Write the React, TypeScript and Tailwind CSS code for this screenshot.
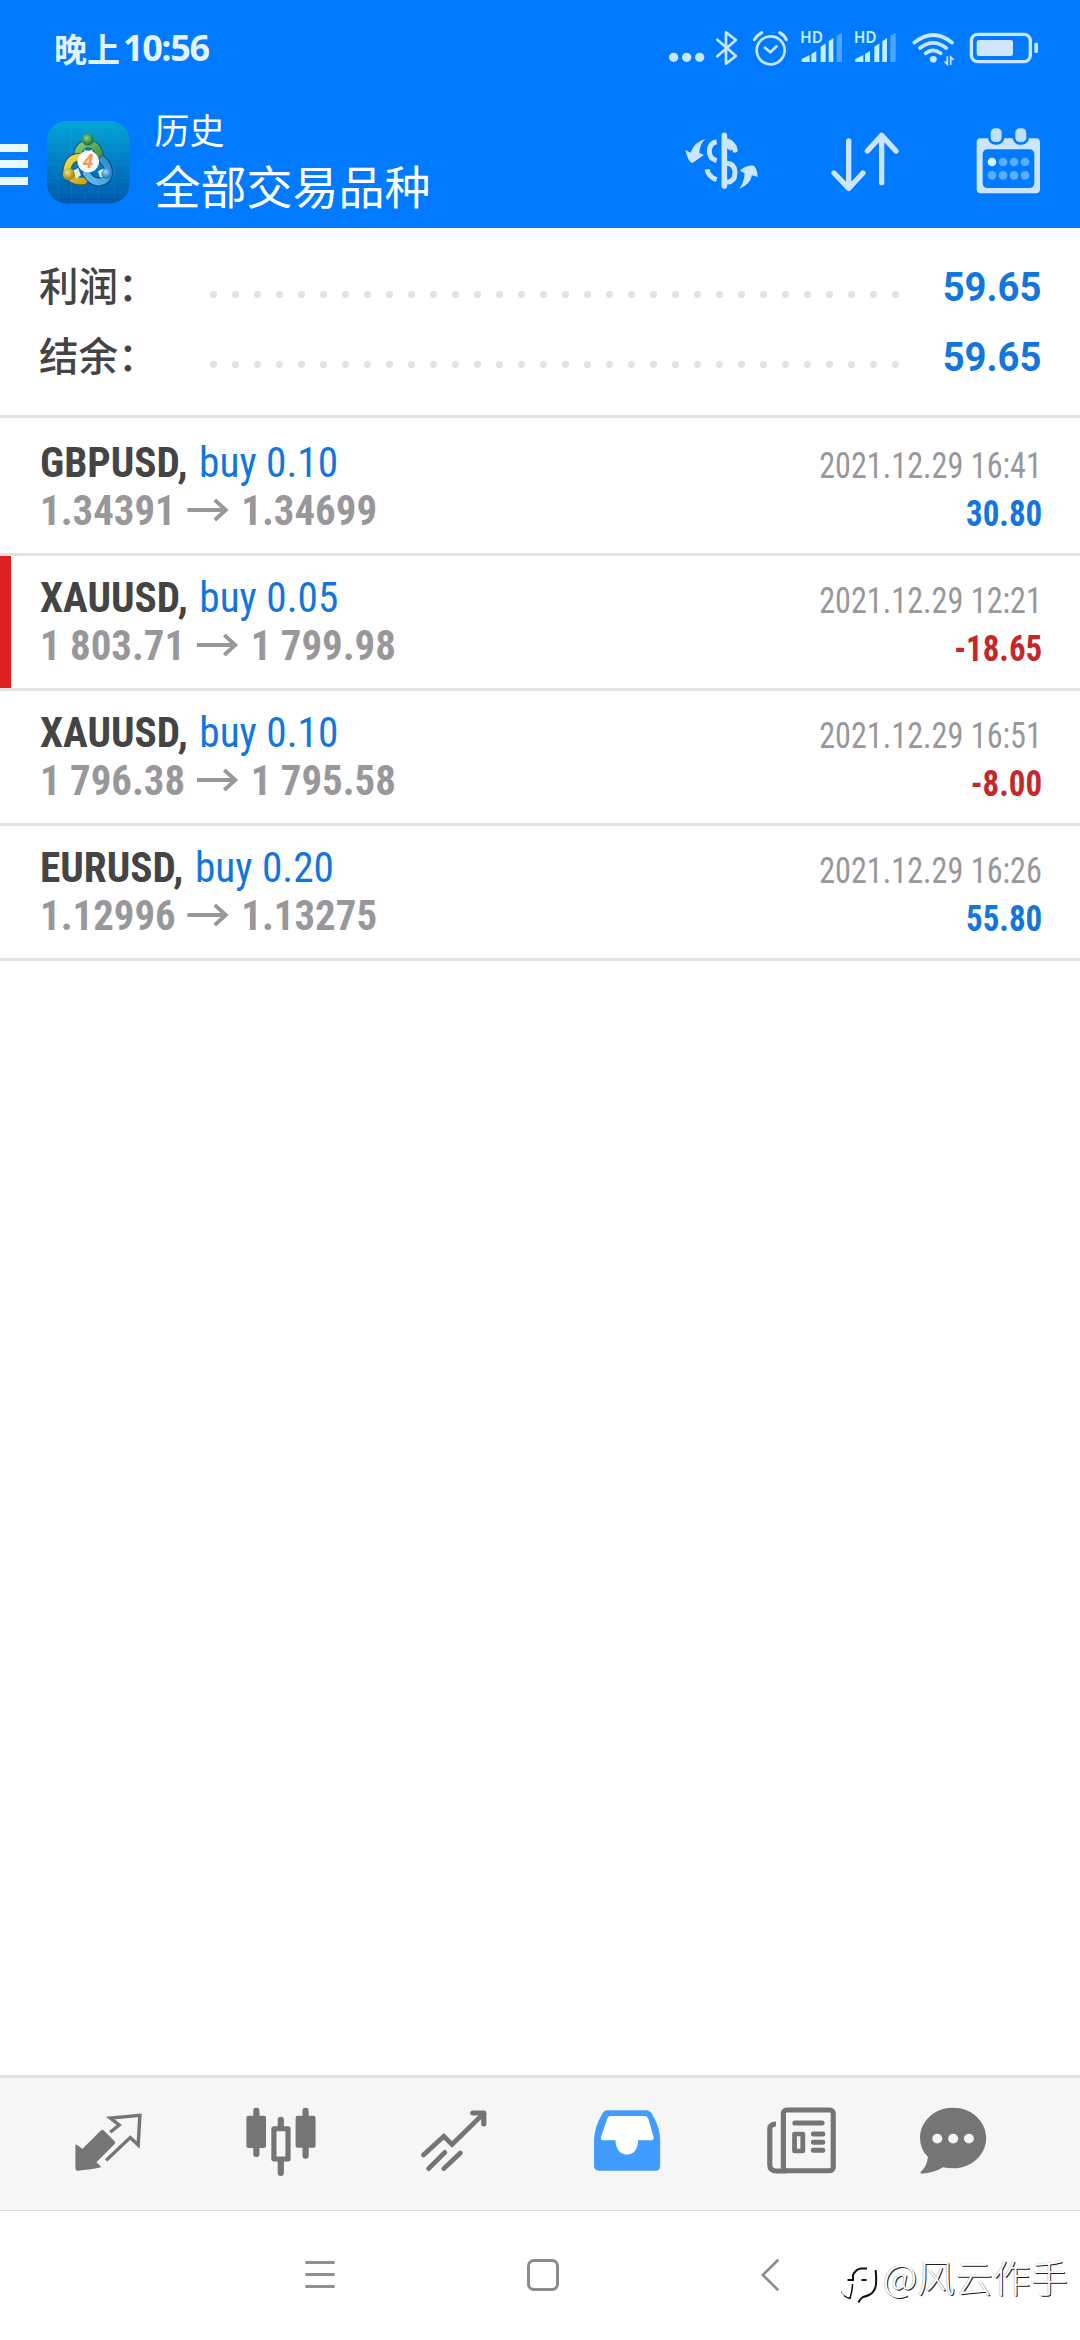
import React from "react";

type Trade = {
  symbol: string;
  volume: string;
  open: string;
  close: string;
  time: string;
  profit: string;
  loss?: boolean;
  marked?: boolean;
};

const trades: Trade[] = [
  { symbol: "GBPUSD,", volume: "buy 0.10", open: "1.34391", close: "1.34699", time: "2021.12.29 16:41", profit: "30.80" },
  { symbol: "XAUUSD,", volume: "buy 0.05", open: "1 803.71", close: "1 799.98", time: "2021.12.29 12:21", profit: "-18.65", loss: true, marked: true },
  { symbol: "XAUUSD,", volume: "buy 0.10", open: "1 796.38", close: "1 795.58", time: "2021.12.29 16:51", profit: "-8.00", loss: true },
  { symbol: "EURUSD,", volume: "buy 0.20", open: "1.12996", close: "1.13275", time: "2021.12.29 16:26", profit: "55.80" },
];

function Signal({ x }: { x: number }) {
  return (
    <g transform={`translate(${x} 0)`}>
      <text x="-2" y="130" fontSize="47" fontWeight="600" fontFamily="Noto Sans, sans-serif" textLength="69" lengthAdjust="spacingAndGlyphs">HD</text>
      <path d="M3 186v-9l24-12v21zM32 186v-24l15-9v33zM60 186v-46l15-10v56zM84 186v-62l14-10v72z" />
      <path d="M108 186v-79l16-9v88z" opacity=".38" />
    </g>
  );
}

function StatusBar() {
  return (
    <div className="flex h-[80px] items-start justify-between pl-[54px] pr-[42px]">
      <div className="mt-[25px] flex h-[46px] items-center leading-[46px]">
        <span className="font-['Noto_Sans_CJK_SC',sans-serif] text-[33px] font-bold">晚上</span>
        <span className="ml-[3px] font-['Open_Sans','Noto_Sans',sans-serif] text-[36px] font-bold tracking-[-1.4px]">10:56</span>
      </div>
      <div className="mt-[30px] flex text-[#c9e6ff]">
        <svg className="h-[36.67px] w-[41.33px]" viewBox="86 90 124 110" fill="currentColor">
          <circle cx="100" cy="172" r="14" /><circle cx="139" cy="172" r="14" /><circle cx="178" cy="172" r="14" />
        </svg>
        <svg className="h-[36.67px] w-[35.33px]" viewBox="210 90 106 110" fill="none" stroke="currentColor" strokeWidth="8" strokeLinejoin="round" strokeLinecap="round">
          <path d="M232 119l56 49-30 23V97l30 23-56 49" />
        </svg>
        <svg className="h-[36.67px] w-[49px]" viewBox="316 90 147 110" fill="none" stroke="currentColor" strokeWidth="8" strokeLinecap="round">
          <circle cx="393" cy="151" r="42" />
          <path d="M344 119q8-13 22-21M420 98q14 8 20 21" strokeWidth="9" />
          <path d="M376 143l16 14 19-18" strokeLinejoin="round" />
        </svg>
        <svg className="-mt-[10px] h-[46.67px] w-[109.67px] text-[#c3f0ff]" viewBox="463 60 329 140" fill="currentColor">
          <Signal x={483} />
          <Signal x={644} />
        </svg>
        <svg className="h-[36.67px] w-[58px]" viewBox="792 90 174 110" fill="none" stroke="currentColor" strokeWidth="11" strokeLinecap="round">
          <path d="M823 128q57-46 113 0M840 144q39-31 79 0M857 160q22-18 45 0" />
          <path d="M869 175q11-8 22 0l-11 13z" fill="currentColor" stroke="none" />
          <circle cx="880" cy="178" r="10" fill="currentColor" stroke="none" />
          <path d="M922 169v24l-8-9M932 195v-24l9 9" strokeWidth="5" strokeLinecap="butt" />
        </svg>
        <svg className="h-[36.67px] w-[76px]" viewBox="966 90 228 110" fill="none">
          <rect x="994" y="103" width="177" height="82" rx="19" stroke="currentColor" strokeWidth="10" />
          <rect x="1010" y="120" width="109" height="48" rx="7" fill="#d0e6ff" />
          <rect x="1183" y="128" width="11" height="31" rx="4" fill="currentColor" />
        </svg>
      </div>
    </div>
  );
}

function AppIcon() {
  return (
    <svg className="ml-[19.500px] mt-[41px] h-[82.500px] w-[82.500px]" viewBox="0 0 246 246">
      <defs>
        <linearGradient id="tile" x1="0" y1="0" x2="0" y2="1">
          <stop offset="0" stopColor="#02a6d8" /><stop offset=".5" stopColor="#027dc4" /><stop offset="1" stopColor="#0059ac" />
        </linearGradient>
        <linearGradient id="green" gradientUnits="userSpaceOnUse" x1="85" y1="50" x2="165" y2="115"><stop offset="0" stopColor="#9ad583" /><stop offset="1" stopColor="#2c8f3f" /></linearGradient>
        <linearGradient id="yellow" gradientUnits="userSpaceOnUse" x1="50" y1="110" x2="110" y2="190"><stop offset="0" stopColor="#ece05c" /><stop offset="1" stopColor="#c3a51f" /></linearGradient>
        <linearGradient id="blue" gradientUnits="userSpaceOnUse" x1="120" y1="180" x2="195" y2="120"><stop offset="0" stopColor="#66bdf0" /><stop offset="1" stopColor="#2b86c8" /></linearGradient>
        <radialGradient id="gHead" cx=".4" cy=".35"><stop offset="0" stopColor="#8fd08a" /><stop offset="1" stopColor="#2c7d45" /></radialGradient>
        <radialGradient id="yHead" cx=".4" cy=".35"><stop offset="0" stopColor="#f3e583" /><stop offset="1" stopColor="#ab8f1c" /></radialGradient>
        <radialGradient id="bHead" cx=".4" cy=".35"><stop offset="0" stopColor="#a3dcf8" /><stop offset="1" stopColor="#2b83c2" /></radialGradient>
      </defs>
      <rect width="246" height="246" rx="58" fill="url(#tile)" />
      <path d="M33 8v230M73 2v242M113 0v246M153 0v246M200 2v242M3 50h240M0 90h246M0 130h246M0 170h246M2 212h242" stroke="#4cc0ee" strokeWidth="1.500" opacity=".22" />
      <g fill="none" strokeLinecap="round">
        <path d="M90 112q2-43 33-43t35 43" stroke="#15503a" strokeWidth="25" />
        <path d="M90 112q2-43 33-43t35 43" stroke="url(#green)" strokeWidth="20" />
        <path d="M92 108q-30 4-33 44 14 30 50 27" stroke="#4d5220" strokeWidth="25" />
        <path d="M92 108q-30 4-33 44 14 30 50 27" stroke="url(#yellow)" strokeWidth="20" />
        <path d="M166 116q20 18 17 42-4 22-28 24-22 0-38-26" stroke="#0c4778" strokeWidth="25" />
        <path d="M166 116q20 18 17 42-4 22-28 24-22 0-38-26" stroke="url(#blue)" strokeWidth="20" />
      </g>
      <path d="M110 84l12 7 15-7-5 18h-17zM78 148l15-8 8 22-14 10zM168 142l-16 8 6 18 16 0z" fill="#dff2df" />
      <circle cx="122" cy="56" r="18" fill="url(#gHead)" />
      <circle cx="65" cy="159" r="18" fill="url(#yHead)" />
      <circle cx="178" cy="157" r="16" fill="url(#bHead)" />
      <circle cx="123" cy="121" r="32" fill="#fbfbf8" />
      <text x="123" y="141" textAnchor="middle" fontFamily="Open Sans, sans-serif" fontSize="56" fontWeight="700" fontStyle="italic" fill="#f09a52">4</text>
    </svg>
  );
}

function TopBar() {
  return (
    <div className="flex h-[148px] items-start pr-[40px]">
      <div className="mt-[63.500px] flex w-[27.500px] flex-col gap-[8.500px]">
        <span className="h-[8px] bg-[#e8f8ff]" />
        <span className="h-[8px] bg-[#e8f8ff]" />
        <span className="h-[8px] bg-[#e8f8ff]" />
      </div>
      <AppIcon />
      <div className="ml-[25px] mt-[24px] flex flex-col font-['Noto_Sans_CJK_SC',sans-serif] font-normal text-white">
        <span className="text-[35px] leading-[50px]">历史</span>
        <span className="text-[46px] leading-[60px]">全部交易品种</span>
      </div>
      <div className="ml-auto mt-[46.700px] flex text-[#cbe5ff]">
        <svg className="h-[68.330px] w-[111.670px]" viewBox="130 380 335 205" fill="none" stroke="currentColor" strokeWidth="15">
          <path d="M137 449l16 8q10-32 44-41-17 15-18 42l14 6-35 24q-13-3-21-39z" fill="currentColor" stroke="none" />
          <path d="M354 530l-17-5q-6 29-38 40 14-18 16-46l-14-8q18-17 42-15 11 12 11 34z" fill="currentColor" stroke="none" />
          <path d="M254 405v152" strokeWidth="17" strokeLinecap="round" />
          <path d="M262 422q20 6 24 27" strokeLinecap="round" strokeWidth="16" />
          <path d="M262 424q12 4 16 16l-4 12-12-8z" fill="currentColor" stroke="none" />
          <path d="M231 424q-22 4-22 29 0 22 22 28M202 507q4 22 29 31" />
          <path d="M262 489q24 2 24 28t-24 29" />
        </svg>
        <svg className="h-[68.330px] w-[145px]" viewBox="465 380 435 205" fill="none" stroke="currentColor" strokeWidth="16" strokeLinecap="round" strokeLinejoin="round">
          <path d="M626 422v142M582 518l44 46 43-46M725 547V405M682 452l43-47 43 47" />
        </svg>
        <svg className="h-[68.330px] w-[100px]" viewBox="900 380 300 205">
          <path fillRule="evenodd" fill="currentColor" d="M1022 414h166q12 0 12 12v141q0 12-12 12h-166q-12 0-12-12V426q0-12 12-12zM1044 447q-16 0-16 16v84q0 16 16 16h123q16 0 16-16v-84q0-16-16-16z" />
          <rect x="1048" y="380" width="41" height="49" rx="17" fill="#bfe1ff" stroke="#007aff" strokeWidth="8" />
          <rect x="1122" y="380" width="41" height="49" rx="17" fill="#bfe1ff" stroke="#007aff" strokeWidth="8" />
          <g fill="#5caeff">
            <circle cx="1056" cy="485" r="13" fill="#d8f2ff" /><circle cx="1089" cy="485" r="13" /><circle cx="1122" cy="485" r="13" /><circle cx="1155" cy="485" r="13" />
            <circle cx="1056" cy="525" r="13" /><circle cx="1089" cy="525" r="13" /><circle cx="1122" cy="525" r="13" /><circle cx="1155" cy="525" r="13" />
          </g>
        </svg>
      </div>
    </div>
  );
}

function SummaryLine({ label, value }: { label: string; value: string }) {
  return (
    <div className="flex h-[70px] items-center">
      <span className="mb-[7px] w-[171px] shrink-0 font-['Noto_Sans_CJK_SC',sans-serif] text-[39.500px] font-medium leading-[60px] text-[#444]">{label}</span>
      <div className="mt-[15px] flex w-[689px] shrink-0 justify-between">
        {Array.from({ length: 32 }, (_, i) => (
          <span key={i} className="size-[7px] rounded-full bg-[#e2e2e2]" />
        ))}
      </div>
      <span className="ml-auto mt-[2px] inline-block origin-right scale-x-[0.955] font-['Roboto',sans-serif] text-[40px] font-bold leading-[60px] text-[#1276dd]">{value}</span>
    </div>
  );
}

function TradeRow({ t }: { t: Trade }) {
  return (
    <div className={`flex h-[135px] justify-between border-b-[3px] border-[#e2e2e2] pr-[38px] font-['Roboto_Condensed','Roboto',sans-serif] [font-stretch:75%] ${t.marked ? "pl-0" : "pl-[40px]"}`}>
      <div className="flex">
        {t.marked && <span className="mr-[29px] w-[11px] bg-[#e01f1f]" />}
        <div className="flex flex-col pt-[17px]">
          <div className="flex h-[48px] origin-left scale-x-[0.96] items-center gap-[12px] self-start whitespace-nowrap text-[43px] leading-[48px]">
            <span className="font-bold text-[#444]">{t.symbol}</span>
            <span className="text-[#1276dd]">{t.volume}</span>
          </div>
          <div className="flex h-[48px] origin-left scale-x-[0.95] items-center self-start whitespace-nowrap text-[43px] font-bold leading-[48px] text-[#98989b]">
            <span>{t.open}</span>
            <svg className="ml-[12px] mr-[13px] h-[24px] w-[44px]" viewBox="0 0 44 24" fill="none" stroke="currentColor" strokeWidth="4">
              <path d="M0 12h41M29 2l11.500 10L29 22" />
            </svg>
            <span>{t.close}</span>
          </div>
        </div>
      </div>
      <div className="flex flex-col items-end pt-[21px] text-[36px] leading-[48px]">
        <span className="origin-right scale-x-[0.895] text-[#98989b]">{t.time}</span>
        <span className={`origin-right scale-x-[0.915] font-bold ${t.loss ? "text-[#c4282b]" : "text-[#1276dd]"}`}>{t.profit}</span>
      </div>
    </div>
  );
}

function TabBar() {
  return (
    <div className="flex h-[136px] items-start border-b border-t-[3px] border-b-[#dcdcdc] border-t-[#e0e0e0] bg-[#f6f6f6] pl-[74px] pt-[25.300px] text-[#757575]">
      <svg className="h-[76.670px] w-[69px]" viewBox="215 130 200 230" preserveAspectRatio="none" fill="none" stroke="currentColor" strokeWidth="10">
        <path d="M219 255q3-2 20 13l53-55q5-5 10 0l30 31q5 5 0 10l-52 54 14 14q-2 3-66 11-9 2-9-8z" fill="currentColor" stroke="none" />
        <path d="M320 218l26-22-26-21 86-8-5 89-23-22-70 68" strokeLinejoin="miter" />
      </svg>
      <svg className="ml-[102.200px] h-[76.670px] w-[71.600px]" viewBox="712 130 208 230" preserveAspectRatio="none" fill="none" stroke="currentColor" strokeWidth="18" strokeLinecap="round">
        <path d="M745 153v130M888 153v135M816 180v20M816 305v35" />
        <rect x="716" y="168" width="57" height="97" rx="6" fill="currentColor" stroke="none" />
        <rect x="859" y="168" width="58" height="96" rx="6" fill="currentColor" stroke="none" />
        <rect x="796" y="207" width="41" height="91" strokeWidth="15" strokeLinejoin="round" />
      </svg>
      <svg className="ml-[103.200px] h-[76.670px] w-[67.600px]" viewBox="1220 130 196 230" preserveAspectRatio="none" fill="none" stroke="currentColor" strokeWidth="14" strokeLinecap="round">
        <path d="M1230 286l59-56 24 24 92-93" />
        <path d="M1373 160h32v33" strokeWidth="15" strokeLinejoin="round" />
        <path d="M1245 327l47-49M1289 327l48-47" />
      </svg>
      <svg className="ml-[105.800px] h-[76.670px] w-[68.200px] text-[#429cff]" viewBox="155 130 198 230" preserveAspectRatio="none">
        <path fill="currentColor" d="M198 152h111q12 0 19 14 22 40 22 74v78q0 15-14 15H173q-15 0-15-15v-78q2-40 22-74 6-14 18-14z" />
        <path fill="#fff" d="M204 169h102q6 0 10 9l15 55q1 8-6 9h-39q-2 42-32 43-31-1-34-43h-37q-7-2-5-9l18-55q3-9 8-9z" />
      </svg>
      <svg className="ml-[104px] h-[76.670px] w-[71.200px]" viewBox="655 130 207 230" preserveAspectRatio="none" fill="none" stroke="currentColor" strokeWidth="15" strokeLinecap="round">
        <rect x="705.500" y="151" width="145" height="182" rx="10" />
        <path d="M684 193q-18 0-18 15v107q0 19 20 19h30" strokeLinecap="butt" />
        <path d="M739 190h79M793 223h27M793 248h27M793 272h27" />
        <rect x="738" y="223" width="24" height="51" strokeWidth="14" strokeLinejoin="round" />
      </svg>
      <svg className="ml-[82px] h-[76.670px] w-[68.200px]" viewBox="1100 130 198 230" preserveAspectRatio="none">
        <path fill="currentColor" d="M1199 144c53 0 96 40 96 91s-43 91-96 91q-16 0-29-3-28 18-64 19-4-3 0-6 18-18 20-44-23-23-23-57c0-51 43-91 96-91z" />
        <g fill="#f6f6f6"><circle cx="1153" cy="237" r="14.500" /><circle cx="1199" cy="237" r="14.500" /><circle cx="1245" cy="237" r="14.500" /></g>
      </svg>
    </div>
  );
}

function NavBar() {
  return (
    <div className="flex h-[129px] items-start bg-white pl-[305px] text-[#8b8b8b]">
      <div className="mt-[50px] flex w-[30px] flex-col gap-[9px]">
        <span className="h-[3px] rounded bg-[#909090]" />
        <span className="h-[3px] rounded bg-[#909090]" />
        <span className="h-[3px] rounded bg-[#909090]" />
      </div>
      <span className="ml-[192px] mt-[48px] h-[32px] w-[32px] rounded-[7px] border-[3px] border-[#8b8b8b]" />
      <svg className="ml-[202px] mt-[48px] h-[32px] w-[18px]" viewBox="0 0 18 32" fill="none" stroke="currentColor" strokeWidth="2.600" strokeLinecap="round">
        <path d="M16.500 1.500L1.800 16l14.700 14.500" />
      </svg>
      <div className="ml-[62px] mt-[40px] flex items-start text-white">
        <svg className="mt-[14px] h-[40px] w-[37px]" viewBox="0 0 37 40" fill="none" stroke="#111">
          <path d="M6.500 15h5.500v-5q3-6 8-6.500h6" strokeWidth="2" />
          <path d="M11.500 19q0 6-2.500 14.500-3-.5-6-3" strokeWidth="1.500" />
          <path d="M0 26q1 3 3 4.500" stroke="#777" />
          <path d="M34.500 5q1 5 .5 14-.5 7-6 10.500-4 2-7 2.500-3 2-4.500 5.500" strokeWidth="2" />
          <path d="M20.500 15h5" strokeWidth="2" />
        </svg>
        <span className="ml-[5px] whitespace-nowrap font-['Noto_Sans_CJK_SC',sans-serif] text-[37.700px] font-light leading-[50px] [text-shadow:1px_1px_0.5px_rgba(0,0,0,0.9),-0.5px_-0.5px_1px_rgba(0,0,0,0.3)]">@风云作手</span>
      </div>
    </div>
  );
}

export default function App() {
  return (
    <div className="flex h-[2340px] w-[1080px] flex-col overflow-hidden bg-white">
      <header className="h-[228px] bg-[#007aff] text-[#e3f4ff]">
        <StatusBar />
        <TopBar />
      </header>
      <section className="flex h-[190px] flex-col border-b-[3px] border-[#e2e2e2] pl-[39px] pr-[39px] pt-[24px]">
        <SummaryLine label="利润：" value="59.65" />
        <SummaryLine label="结余：" value="59.65" />
      </section>
      <main className="grow pt-[3px]">
        {trades.map((t) => (
          <TradeRow key={t.time} t={t} />
        ))}
      </main>
      <TabBar />
      <NavBar />
    </div>
  );
}
